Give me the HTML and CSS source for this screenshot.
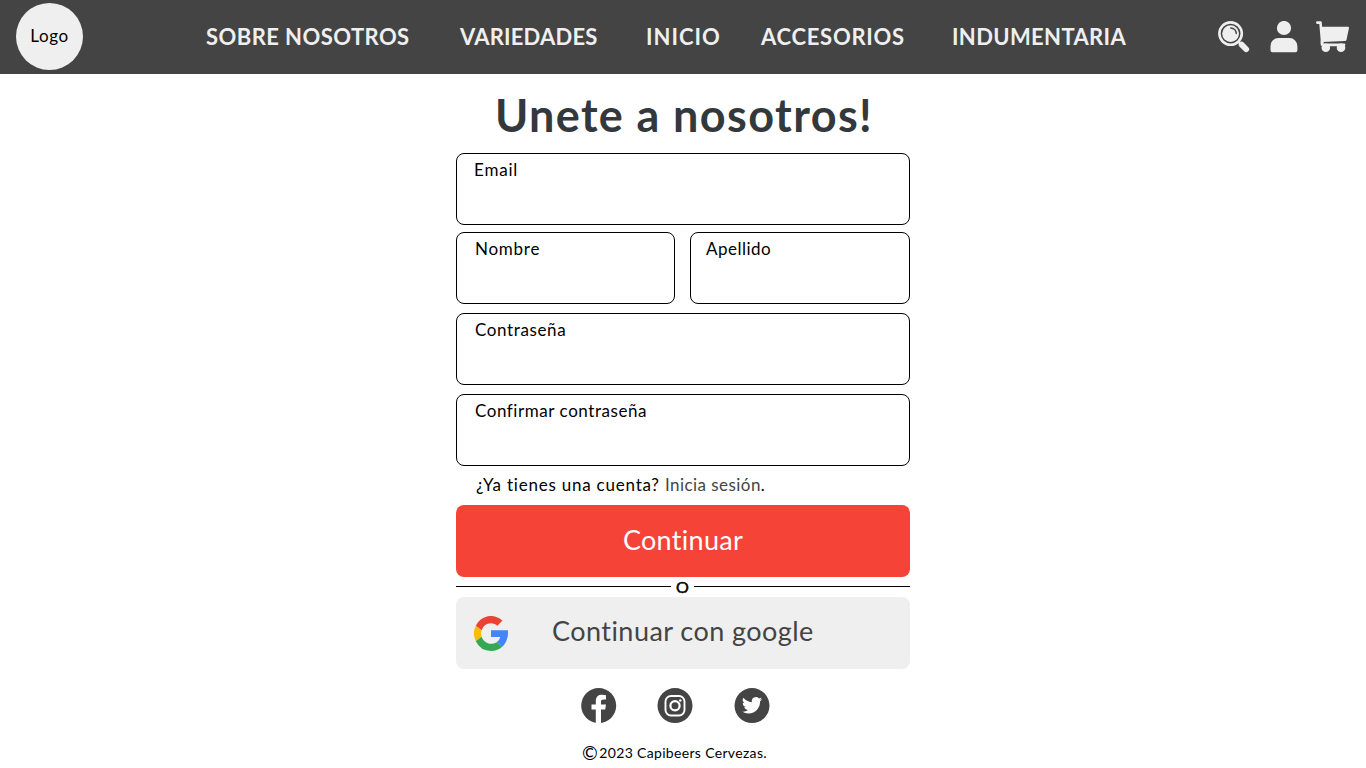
FILE: index.html
```html
<!DOCTYPE html>
<html lang="es">
<head>
<meta charset="utf-8">
<title>Capibeers - Registro</title>
<link rel="stylesheet" href="styles.css">
</head>
<body>
<header class="topbar">
  <a class="logo"><span class="t logo-text">Logo</span></a>
  <nav class="nav">
    <a class="n1"><span class="t">SOBRE NOSOTROS</span></a>
    <a class="n2"><span class="t">VARIEDADES</span></a>
    <a class="n3"><span class="t">INICIO</span></a>
    <a class="n4"><span class="t">ACCESORIOS</span></a>
    <a class="n5"><span class="t">INDUMENTARIA</span></a>
  </nav>
  <div class="actions">
    <svg class="i-search" width="32" height="32" viewBox="0 0 32 32">
      <circle cx="12.6" cy="12.6" r="11.2" fill="none" stroke="#efefef" stroke-width="2.6"/>
      <circle cx="12.6" cy="12.6" r="8.4" fill="#efefef"/>
      <path d="M12.800 7a5.800 5.800 0 0 1 5.500 5.400" fill="none" stroke="#444" stroke-width="1.500" stroke-linecap="round"/>
      <path d="M20.300 20.300l2.500 2.500" stroke="#efefef" stroke-width="2.400"/>
      <path d="M23.600 23.600l4.600 4.600" stroke="#efefef" stroke-width="5.800" stroke-linecap="round"/>
    </svg>
    <svg class="i-user" width="28" height="32" viewBox="0 0 28 32">
      <circle cx="14" cy="7" r="7.100" fill="#efefef"/>
      <path d="M8.500 17h11a8 8 0 0 1 7.900 8v4.200a2 2 0 0 1-2 2H2.500a2 2 0 0 1-2-2V25a8 8 0 0 1 8-8z" fill="#efefef"/>
    </svg>
    <svg class="i-cart" width="34" height="32" viewBox="0 0 34 32">
      <path d="M1.300 1.600h3.200l1.700 20" fill="none" stroke="#efefef" stroke-width="2.600" stroke-linecap="round" stroke-linejoin="round"/>
      <path d="M5 5.700h27.200q1 0 .8 1l-2.500 12q-.3 1.300-1.500 1.400L6.500 21z" fill="#efefef"/>
      <path d="M6 20.400v3.200M8 23.800h20" stroke="#efefef" stroke-width="2.800" stroke-linecap="round"/>
      <circle cx="9.800" cy="26.800" r="4.300" fill="#efefef"/><circle cx="25" cy="26.800" r="4.300" fill="#efefef"/>
    </svg>
  </div>
</header>
<main class="signup">
  <h1 class="title"><span class="t">Unete a nosotros!</span></h1>
  <form class="form">
    <label class="field email"><span class="t">Email</span></label>
    <div class="names">
      <label class="field first"><span class="t">Nombre</span></label>
      <label class="field last"><span class="t">Apellido</span></label>
    </div>
    <label class="field"><span class="t">Contraseña</span></label>
    <label class="field confirm"><span class="t">Confirmar contraseña</span></label>
    <p class="account"><span class="t">¿Ya tienes una cuenta? <a>Inicia sesión</a>.</span></p>
    <button type="button" class="btn primary"><span class="t">Continuar</span></button>
    <div class="divider"><span class="or">O</span></div>
    <button type="button" class="btn google">
      <svg width="34" height="35" viewBox="2 2 44 44" preserveAspectRatio="none">
        <path fill="#ea4335" d="M24 11c3.200 0 6.100 1.200 8.300 3.200l6.500-6.500A22 22 0 0 0 4.300 14.200l7.500 5.700A13 13 0 0 1 24 11z"/>
        <path fill="#fbbc05" d="M11.800 28.100a13 13 0 0 1 0-8.200l-7.500-5.700a22 22 0 0 0 0 19.600z"/>
        <path fill="#34a853" d="M24 46c5.900 0 10.900-1.900 14.600-5.300l-7.200-5.600A13.500 13.500 0 0 1 11.800 28.100l-7.500 5.700A22 22 0 0 0 24 46z"/>
        <path fill="#4285f4" d="M46 20H24v8.500h12a10.500 10.500 0 0 1-4.600 6.600l7.200 5.600C43 36.600 46.600 30 46 20z"/>
      </svg>
      <span class="t">Continuar con google</span>
    </button>
  </form>
</main>
<footer class="footer">
  <div class="social">
    <svg width="36" height="36" viewBox="0 0 36 36">
      <circle cx="17.700" cy="17.600" r="17.500" fill="#444"/>
      <path d="M14.800 36V21.500H10.500v-5h4.300v-3.300c0-4.500 2.500-6.400 6.300-6.400 1.500 0 2.800.2 3.900.4v4.300h-2.300c-2 0-2.700.9-2.700 2.300v2.700h5l-.8 5H20V36z" fill="#fff"/>
    </svg>
    <svg width="36" height="36" viewBox="0 0 36 36">
      <circle cx="18" cy="17.600" r="17.500" fill="#444"/>
      <rect x="8.500" y="8" width="19" height="19.500" rx="5.500" fill="none" stroke="#fff" stroke-width="1.900"/>
      <circle cx="18" cy="17.800" r="4.600" fill="none" stroke="#fff" stroke-width="2.200"/>
      <circle cx="23.300" cy="12.500" r="1.200" fill="#fff"/>
    </svg>
    <svg width="36" height="36" viewBox="0 0 36 36">
      <circle cx="18" cy="17.600" r="17.500" fill="#444"/>
      <path transform="translate(8 7.200) scale(.84)" fill="#fff" d="M23.950 4.570a10 10 0 0 1-2.820.77 4.960 4.960 0 0 0 2.160-2.720c-.95.550-2 .95-3.130 1.180a4.920 4.920 0 0 0-8.380 4.480C7.690 8.090 4.070 6.130 1.640 3.160a4.920 4.920 0 0 0 1.520 6.570 4.900 4.900 0 0 1-2.230-.61v.06a4.920 4.920 0 0 0 3.950 4.830 5 5 0 0 1-2.210.08 4.940 4.940 0 0 0 4.600 3.420A9.870 9.870 0 0 1 0 19.540a13.990 13.990 0 0 0 7.550 2.210c9.050 0 14-7.500 14-13.980 0-.21 0-.42-.02-.63a9.940 9.940 0 0 0 2.460-2.550z"/>
    </svg>
  </div>
  <p class="copy"><span class="t sign">©</span><span class="t">2023 Capibeers Cervezas.</span></p>
</footer>
</body>
</html>
```
FILE: styles.css
```css
* { box-sizing: border-box; }
body { margin: 0; background: #fff; color: #000; font-family: Lato, sans-serif; font-variant-ligatures: none; height: 768px; overflow: hidden; }
.t { display: inline-block; white-space: nowrap; }
.topbar { height: 74px; background: #444; display: flex; align-items: center; padding-left: 16px; color: #efefef; }
.logo { width: 67px; height: 67px; border-radius: 50%; background: #efefef; color: #000; display: flex; align-items: center; justify-content: center; margin-top: -2px; padding-bottom: 2px; font-size: 17px; letter-spacing: .6px; }
.nav { display: flex; margin-left: 123px; width: 1012px; font-size: 22px; font-weight: 700; line-height: 26px; margin-top: -1px; }
.n1 { width: 254px; letter-spacing: .44px; }
.n2 { width: 186px; letter-spacing: .2px; }
.n3 { width: 115px; letter-spacing: 1px; }
.n4 { width: 191px; letter-spacing: .72px; }
.n5 { letter-spacing: .35px; }
.actions { display: flex; height: 32px; margin-top: -1px; }
.i-user { margin-left: 20px; }
.i-cart { margin-left: 18px; }
.signup { width: 454px; margin-left: 456px; }
.title { margin: 0; height: 79px; padding: 13px 0 0 2px; text-align: center; font-size: 45px; line-height: 56px; font-weight: 700; letter-spacing: 1.380px; color: #33383d; }
.form { display: flex; flex-direction: column; }
.field { height: 72px; border: 1px solid #000; border-radius: 8px; padding: 5px 18px; font-size: 17px; line-height: 22px; margin-bottom: 9px; letter-spacing: .62px; }
.email { margin-bottom: 7px; padding-left: 17px; letter-spacing: .8px; }
.names { display: grid; grid-template-columns: 219px 220px; gap: 15px; }
.first { letter-spacing: .75px; }
.last { padding-left: 15px; letter-spacing: .5px; }
.confirm { margin-bottom: 0; letter-spacing: .56px; }
.account { margin: 0; height: 39px; padding: 8px 0 0 20px; font-size: 17px; line-height: 22px; letter-spacing: .78px; }
.account a { color: #444; letter-spacing: .45px; }
.btn { height: 72px; border: 0; border-radius: 8px; font: 27px/34px Lato, sans-serif; padding: 0; }
.primary { background: #f64338; color: #fff; padding-bottom: 2px; letter-spacing: .3px; }
.divider { height: 20px; display: flex; align-items: center; gap: 5px; padding-bottom: 1px; }
.divider::before, .divider::after { content: ""; height: 1px; background: #000; }
.divider::before { width: 215px; }
.divider::after { flex: 1; }
.or { width: 13px; height: 19px; font-size: 16px; line-height: 20px; display: flex; justify-content: center; -webkit-text-stroke: .5px #000; }
.google { background: #efefef; color: #444; display: flex; align-items: center; padding-left: 18px; letter-spacing: .45px; }
.google .t { margin: -4px 0 0 44px; }
.footer { margin-left: 581px; padding-top: 19px; }
.social { display: flex; gap: 40.300px; }
.copy { margin: 18px 0 0 1px; font-size: 14px; line-height: 22px; display: flex; gap: 1.500px; letter-spacing: .33px; }
.sign { font-size: 19px; letter-spacing: 0; }
```
